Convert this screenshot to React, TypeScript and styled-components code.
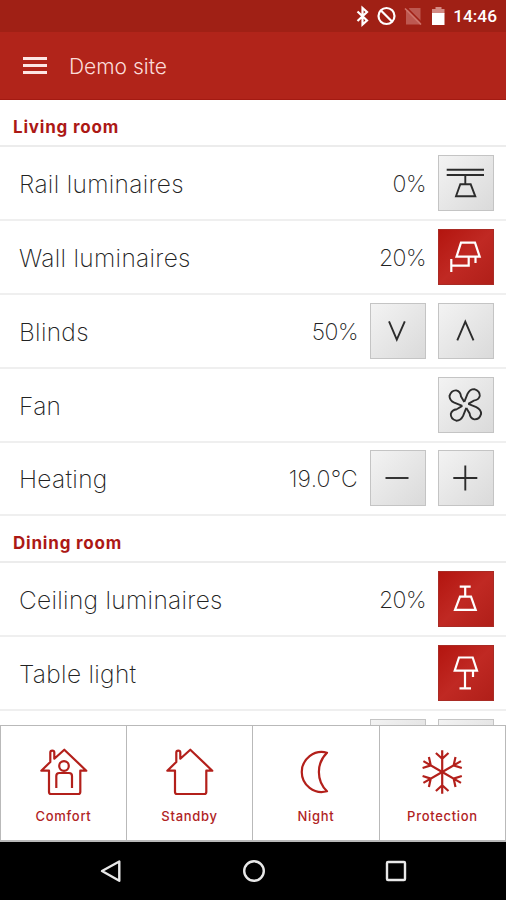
import React from 'react';
import styled, { createGlobalStyle } from 'styled-components';

type IconName =
  | 'rail'
  | 'wall'
  | 'down'
  | 'up'
  | 'fan'
  | 'minus'
  | 'plus'
  | 'ceiling'
  | 'table';

interface Control {
  icon?: IconName;
  active?: boolean;
}

interface Device {
  name: string;
  value?: string;
  controls: Control[];
}

const rooms: { name: string; devices: Device[] }[] = [
  {
    name: 'Living room',
    devices: [
      { name: 'Rail luminaires', value: '0%', controls: [{ icon: 'rail' }] },
      { name: 'Wall luminaires', value: '20%', controls: [{ icon: 'wall', active: true }] },
      { name: 'Blinds', value: '50%', controls: [{ icon: 'down' }, { icon: 'up' }] },
      { name: 'Fan', controls: [{ icon: 'fan' }] },
      { name: 'Heating', value: '19.0°C', controls: [{ icon: 'minus' }, { icon: 'plus' }] },
    ],
  },
  {
    name: 'Dining room',
    devices: [
      { name: 'Ceiling luminaires', value: '20%', controls: [{ icon: 'ceiling', active: true }] },
      { name: 'Table light', controls: [{ icon: 'table', active: true }] },
      { name: '', controls: [{}, {}] },
    ],
  },
];

const petal = 'M-1 -3L2.2 -11Q4.5 -15.8 9 -15.8Q14.8 -14 14.5 -9Q13.5 -4.8 8.5 -4.3L3 -1';

const icons: Record<IconName, React.ReactNode> = {
  rail: (
    <path d="M8.7 14.7H46M8.7 20H46M27.3 20V29.3M22.3 29.3H32.7L37.3 41.3H18Z" />
  ),
  wall: (
    <path d="M23 13.7H37L41.7 27.7H18.5ZM30.7 27.7V36.7H13.3M13.3 30V43M37.5 28V34" />
  ),
  down: <path d="M19 18.3L26.8 36.7L34.8 18.3" />,
  up: <path d="M19.3 37.3L27.3 18.7L35.5 37.3" />,
  fan: (
    <g transform="translate(27.3 27.9)">
      {[0, 90, 180, 270].map((angle) => (
        <path key={angle} d={petal} transform={`rotate(${angle})`} />
      ))}
    </g>
  ),
  minus: <path d="M15.5 28H38.5" />,
  plus: <path d="M15.3 28H39.3M27.3 15.5V40.5" />,
  ceiling: <path d="M21.7 15.7H32.7M27.2 15.7V25.7M22 25.7H33L37.7 38.8H17Z" />,
  table: <path d="M21 12.5H34.7L39 25.7H16.7ZM27 25.7V43.3M21.5 43.3H33M35 26V32" />,
};

const housePath =
  'M24.3 1.7L46.3 22.7H40.3V44Q40.3 46 38.3 46H11Q9 46 9 44V22.7H1.3L10.3 14V4.5Q10.3 2.7 12.3 2.7Q14.3 2.7 14.3 4.5V10.7Z';

const modes = [
  {
    label: 'Comfort',
    icon: (
      <>
        <path d={housePath} />
        <circle cx="24" cy="18" r="4.8" />
        <path d="M16.3 40V28Q16.3 25 19.3 25H29Q32 25 32 28V40" />
      </>
    ),
  },
  { label: 'Standby', icon: <path d={housePath} /> },
  { label: 'Night', icon: <path d="M35 4.7A20 20 0 1 0 35 43.3A27 27 0 0 1 35 4.7Z" /> },
  {
    label: 'Protection',
    icon: (
      <g transform="translate(23.2 24)">
        {[0, 60, 120, 180, 240, 300].map((angle) => (
          <path
            key={angle}
            d="M0 0V-21.7M-6.3 -19L0 -13.2L6.3 -19"
            transform={`rotate(${angle})`}
          />
        ))}
      </g>
    ),
  },
];

export default function App() {
  return (
    <>
      <GlobalStyle />
      <Screen>
        <StatusBar>
          <StatusIcons width="97" height="32" viewBox="0 0 97 32" fill="none">
            <path
              d="M1.5 11.5L11 20.5L6.5 24.5V8L11 12L1.5 21"
              stroke="#fff"
              strokeWidth="2.2"
            />
            <circle cx="30.5" cy="16" r="8" stroke="#fff" strokeWidth="2.2" />
            <path d="M25 10.5L36 21.5" stroke="#fff" strokeWidth="2.2" />
            <path d="M53.5 8H64.5V24.5H50V11Z" fill="#bd5850" />
            <path d="M50.5 7.5L66 23" stroke="#a02015" strokeWidth="1.6" />
            <path d="M49 8.5L65 24.5" stroke="#cf746c" strokeWidth="1.6" />
            <path d="M76 9H79.5V7H85.5V9H88.5V13.5H76Z" fill="#d38a84" />
            <path d="M76 13H88.5V25H76Z" fill="#fff" />
          </StatusIcons>
          <Clock>14:46</Clock>
        </StatusBar>
        <AppBar>
          <MenuIcon>
            <span />
            <span />
            <span />
          </MenuIcon>
          <Title>Demo site</Title>
        </AppBar>

        <DeviceList>
          {rooms.map((room) => (
            <Room key={room.name}>
              <RoomHeader>{room.name}</RoomHeader>
              {room.devices.map((device) => (
                <DeviceRow key={device.name}>
                  <DeviceName>{device.name}</DeviceName>
                  {device.value && (
                    <DeviceValue $percent={device.value.endsWith('%')}>
                      {device.value}
                    </DeviceValue>
                  )}
                  {device.controls.map((control, index) => (
                    <ControlButton key={index} $active={control.active}>
                      {control.icon && (
                        <svg width="56" height="56" viewBox="0 0 56 56">
                          {icons[control.icon]}
                        </svg>
                      )}
                    </ControlButton>
                  ))}
                </DeviceRow>
              ))}
            </Room>
          ))}
        </DeviceList>

        <ModeBar>
          {modes.map((mode) => (
            <ModeButton key={mode.label}>
              <svg width="48" height="48" viewBox="0 0 48 48">
                {mode.icon}
              </svg>
              <span>{mode.label}</span>
            </ModeButton>
          ))}
        </ModeBar>

        <NavBar>
          <svg width="24" height="24" viewBox="0 0 24 24">
            <path d="M3 12L20.3 2.5V21.7Z" />
          </svg>
          <svg width="24" height="24" viewBox="0 0 24 24">
            <circle cx="12" cy="12" r="9.8" />
          </svg>
          <svg width="24" height="24" viewBox="0 0 24 24">
            <rect x="3" y="3" width="18" height="18" rx="1" />
          </svg>
        </NavBar>
      </Screen>
    </>
  );
}

const GlobalStyle = createGlobalStyle`
  * {
    box-sizing: border-box;
  }

  body {
    margin: 0;
    font-family: Inter, 'Open Sans', sans-serif;
  }
`;

const Screen = styled.div`
  width: 506px;
  height: 900px;
  display: flex;
  flex-direction: column;
  background: #fff;
  overflow: hidden;
`;

const StatusBar = styled.div`
  height: 32px;
  flex: none;
  display: flex;
  align-items: center;
  justify-content: flex-end;
  padding-right: 9px;
  background: #a02015;
`;

const StatusIcons = styled.svg`
  flex: none;
`;

const Clock = styled.span`
  font: 500 17.3px Roboto, sans-serif;
  color: #fff;
  line-height: 32px;
`;

const AppBar = styled.header`
  height: 68px;
  flex: none;
  display: flex;
  align-items: center;
  padding: 0 23px;
  gap: 22px;
  background: #b1241a;
  border-bottom: 1px solid #a31a12;
`;

const MenuIcon = styled.div`
  width: 24px;
  display: flex;
  flex-direction: column;
  gap: 4px;

  span {
    height: 3px;
    background: #fde6e4;
  }
`;

const Title = styled.h1`
  margin: 0;
  padding-top: 1px;
  font-size: 21px;
  font-weight: 300;
  color: #fbdcd9;
`;

const DeviceList = styled.main`
  flex: 1;
  min-height: 0;
  overflow: hidden;
`;

const Room = styled.section`
  & + & {
    margin-top: -0.6px;
  }
`;

const RoomHeader = styled.h2`
  height: 47.4px;
  margin: 0;
  padding: 4px 13px 0;
  font-size: 17px;
  font-weight: 700;
  letter-spacing: 0.8px;
  line-height: 46px;
  color: #ac1815;
  border-bottom: 2px solid #ececec;
`;

const DeviceRow = styled.div`
  height: 73.8px;
  display: flex;
  align-items: center;
  gap: 12px;
  padding: 0 12px 0 19px;
  border-bottom: 2px solid #efefef;
`;

const DeviceName = styled.span`
  flex: 1;
  padding-top: 2px;
  font-size: 24.5px;
  font-weight: 200;
  letter-spacing: 0.3px;
  color: #222;
`;

const DeviceValue = styled.span<{ $percent: boolean }>`
  padding-top: 2px;
  font-size: 23px;
  font-weight: 200;
  letter-spacing: ${({ $percent }) => ($percent ? '-0.5px' : '0.2px')};
  color: #222;
`;

const ControlButton = styled.button<{ $active?: boolean }>`
  width: 56px;
  height: 56px;
  flex: none;
  padding: 0;
  border: 1px solid ${({ $active }) => ($active ? '#a92b25' : '#c4c4c4')};
  background: ${({ $active }) =>
    $active
      ? 'linear-gradient(135deg, #b3150f, #c02923 50%, #b01f19)'
      : 'linear-gradient(135deg, #f3f3f3, #dadada)'};

  svg {
    display: block;
    margin: -1px;
    fill: none;
    stroke: ${({ $active }) => ($active ? '#fff' : '#2c2c2c')};
    stroke-width: ${({ $active }) => ($active ? 2.2 : 1.9)};
  }
`;

const ModeBar = styled.nav`
  height: 117px;
  flex: none;
  display: grid;
  grid-template-columns: 125px 126px 127px 1fr;
  border: 1px solid #b9b9b9;
  border-bottom-width: 2px;
`;

const ModeButton = styled.button`
  display: flex;
  flex-direction: column;
  align-items: center;
  padding: 22px 0 0;
  border: 0;
  background: #fff;
  font: 500 13px Inter, sans-serif;
  letter-spacing: 0.7px;
  color: #b0231f;

  & + & {
    border-left: 1px solid #b9b9b9;
  }

  svg {
    fill: none;
    stroke: #b3201b;
    stroke-width: 2.2;
    stroke-linejoin: round;
  }

  span {
    margin-top: 12px;
  }
`;

const NavBar = styled.footer`
  height: 58px;
  flex: none;
  display: flex;
  align-items: center;
  justify-content: center;
  gap: 118.5px;
  padding-left: 1px;
  background: #000;

  svg {
    fill: none;
    stroke: #e8e8e8;
    stroke-width: 2.4;
    stroke-linejoin: round;
  }
`;
